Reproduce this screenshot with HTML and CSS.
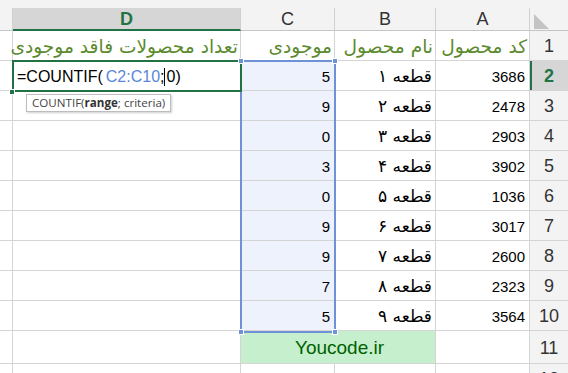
FILE: index.html
```html
<!DOCTYPE html>
<html lang="fa">
<head>
<meta charset="utf-8">
<link rel="stylesheet" href="styles.css">
</head>
<body>
<div class="sheet">
  <div class="topstrip"></div>
  <div class="grid">
    <div class="hd"></div>
    <div class="hd col sel">D</div>
    <div class="hd col">C</div>
    <div class="hd col">B</div>
    <div class="hd col">A</div>
    <div class="hd rn-corner"><svg width="15" height="15" viewBox="0 0 15 15"><polygon points="0,0 0,15 15,15" fill="#c4c4c4"/></svg></div>

    <div class="c"></div>
    <div class="c fa title">تعداد محصولات فاقد موجودی</div>
    <div class="c fa title">موجودی</div>
    <div class="c fa title">نام محصول</div>
    <div class="c fa title">کد محصول</div>
    <div class="rn">1</div>

    <div class="c"></div>
    <div class="c formula">=COUNTIF(<span class="ref">C2:C10</span>;<span class="caret"></span>0)</div>
    <div class="c num inr">5</div>
    <div class="c fa item">قطعه ۱</div>
    <div class="c num">3686</div>
    <div class="rn act">2</div>

    <div class="c"></div><div class="c"></div>
    <div class="c num inr">9</div><div class="c fa item">قطعه ۲</div><div class="c num">2478</div><div class="rn">3</div>

    <div class="c"></div><div class="c"></div>
    <div class="c num inr">0</div><div class="c fa item">قطعه ۳</div><div class="c num">2903</div><div class="rn">4</div>

    <div class="c"></div><div class="c"></div>
    <div class="c num inr">3</div><div class="c fa item">قطعه ۴</div><div class="c num">3902</div><div class="rn">5</div>

    <div class="c"></div><div class="c"></div>
    <div class="c num inr">0</div><div class="c fa item">قطعه ۵</div><div class="c num">1036</div><div class="rn">6</div>

    <div class="c"></div><div class="c"></div>
    <div class="c num inr">9</div><div class="c fa item">قطعه ۶</div><div class="c num">3017</div><div class="rn">7</div>

    <div class="c"></div><div class="c"></div>
    <div class="c num inr">9</div><div class="c fa item">قطعه ۷</div><div class="c num">2600</div><div class="rn">8</div>

    <div class="c"></div><div class="c"></div>
    <div class="c num inr">7</div><div class="c fa item">قطعه ۸</div><div class="c num">2323</div><div class="rn">9</div>

    <div class="c"></div><div class="c"></div>
    <div class="c num inr">5</div><div class="c fa item">قطعه ۹</div><div class="c num">3564</div><div class="rn">10</div>

    <div class="c"></div><div class="c"></div>
    <div class="c good">Youcode.ir</div>
    <div class="c"></div>
    <div class="rn">11</div>

    <div class="c"></div><div class="c"></div><div class="c"></div><div class="c"></div><div class="c"></div>
    <div class="rn">12</div>
  </div>

  <div class="selection"></div>
  <div class="active"></div>
  <div class="handle h-tl"></div>
  <div class="handle h-tr"></div>
  <div class="handle h-bl"></div>
  <div class="handle h-br"></div>
  <div class="ghandle"></div>
  <div class="tip">COUNTIF(<b>range</b>; criteria)</div>
</div>
</body>
</html>
```

FILE: styles.css
```css
* { box-sizing: border-box; }
html, body { margin: 0; padding: 0; background: #fff; }
body { width: 568px; height: 373px; overflow: hidden; font-family: "Liberation Sans", Arial, sans-serif; }

.sheet { position: relative; width: 568px; height: 373px; overflow: hidden; }
.topstrip { height: 8px; background: #f3f3f3; }

.grid {
  display: grid;
  grid-template-columns: 13px 228px 94px 101px 94px 38px;
  grid-template-rows: 23px repeat(10, 30px) 33px 30px;
}

.hd {
  background: #f3f3f3;
  border-right: 1px solid #d0d0d0;
  border-bottom: 1px solid #c6c6c6;
  display: flex; align-items: center; justify-content: center;
  font-size: 18px; color: #333;
  padding-top: 1px;
}
.hd.sel { background: #d6d6d6; color: #217346; font-weight: bold; border-bottom: 2px solid #217346; }
.rn-corner { border-right: none; justify-content: flex-start; padding-left: 4px; padding-top: 5px; }

.c {
  border-right: 1px solid #d4d4d4;
  border-bottom: 1px solid #d4d4d4;
  display: flex; align-items: center;
  white-space: nowrap; overflow: visible;
  font-size: 15px; color: #000;
}
.fa { direction: rtl; font-family: "DejaVu Sans", sans-serif; justify-content: flex-start; padding-right: 2px; }
.title { font-size: 18.6px; color: #5b8a2e; padding-top: 1px; }
.item { font-size: 17px; padding-right: 3px; }
.num { justify-content: flex-end; padding-right: 4px; padding-top: 2px; }
.inr { background: #edf2fc; }
.good { grid-column: span 2; background: #c6efce; color: #006100; font-size: 19px; justify-content: center; padding-top: 2px; padding-left: 3px; }

.formula { font-size: 16px; padding-left: 4px; padding-top: 2px; }
.ref { color: #5a87d8; margin-left: 3px; }
.caret { display: inline-block; width: 1px; height: 18px; background: #000; margin: 0 1px 0 0; vertical-align: -3px; }

.rn {
  background: #f3f3f3;
  border-bottom: 1px solid #d4d4d4;
  display: flex; align-items: center; justify-content: center;
  font-size: 18px; color: #333; padding-top: 2px;
}
.rn.act { background: #d6d6d6; color: #217346; font-weight: bold; box-shadow: inset 2px 0 0 #217346; }

.selection { position: absolute; left: 240px; top: 60px; width: 96px; height: 273px; border: 2px solid #6f92d6; }
.active { position: absolute; left: 12px; top: 60px; width: 230px; height: 32px; border: 2px solid #217346; }
.handle { position: absolute; width: 6px; height: 6px; background: #6f92d6; border: 1px solid #fff; }
.h-tl { left: 238px; top: 58px; }
.h-tr { left: 332px; top: 58px; }
.h-bl { left: 238px; top: 329px; }
.h-br { left: 332px; top: 329px; }
.ghandle { position: absolute; left: 9px; top: 89px; width: 6px; height: 6px; background: #217346; border: 1px solid #fff; }

.tip {
  position: absolute; left: 26px; top: 94px;
  background: #fff; border: 1px solid #bdbdbd;
  box-shadow: 1px 1px 2px rgba(0,0,0,0.2);
  font-family: "Open Sans", "Noto Sans", sans-serif; font-size: 11.6px; color: #444;
  padding: 0 5px; height: 18px; line-height: 16px; white-space: nowrap;
}
.tip b { font-weight: bold; color: #333; }
```
